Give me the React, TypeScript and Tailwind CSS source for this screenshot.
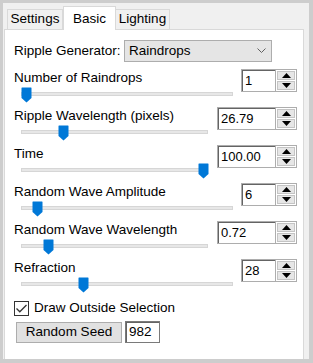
const font = "font-['Liberation_Sans',Arial,sans-serif]";

const rows = [
  { label: "Number of Raindrops", value: "1", thumb: 21, end: 233, wide: false },
  { label: "Ripple Wavelength (pixels)", value: "26.79", thumb: 58, end: 208, wide: true },
  { label: "Time", value: "100.00", thumb: 198, end: 208, wide: true },
  { label: "Random Wave Amplitude", value: "6", thumb: 32, end: 233, wide: false },
  { label: "Random Wave Wavelength", value: "0.72", thumb: 43, end: 208, wide: true },
  { label: "Refraction", value: "28", thumb: 78, end: 233, wide: false },
];

function Thumb() {
  return (
    <svg width="11" height="16" viewBox="0 0 11 16">
      <path d="M1 0.5 H10 Q10.5 0.5 10.5 1 V11 L5.5 15.5 L0.5 11 V1 Q0.5 0.5 1 0.5 Z" fill="#0078d7" />
    </svg>
  );
}

function Spin({ value, wide }: { value: string; wide: boolean }) {
  return (
    <div className={`flex h-[23px] border border-[#adadad] bg-white ${wide ? "w-[80px]" : "w-[56px]"}`}>
      <div className="flex flex-1 items-center border-l border-t border-[#646464] pl-[2px] text-[13px] text-black">
        {value}
      </div>
      <div className="flex w-[21px] flex-col gap-px border-l border-[#adadad] bg-white p-px">
        <div className="flex flex-1 items-center justify-center border border-[#c4c4c4] bg-[#e6e6e6]">
          <svg width="9" height="5" viewBox="0 0 9 5">
            <path d="M0 5 L4.5 0 L9 5 Z" fill="#000" />
          </svg>
        </div>
        <div className="flex flex-1 items-center justify-center border border-[#c4c4c4] bg-[#e6e6e6]">
          <svg width="9" height="5" viewBox="0 0 9 5">
            <path d="M0 0 L9 0 L4.5 5 Z" fill="#000" />
          </svg>
        </div>
      </div>
    </div>
  );
}

function Group({ label, value, thumb, end, wide }: (typeof rows)[number]) {
  return (
    <div className="flex h-[38px] items-start pl-[9px] pr-[6px]">
      <div className="flex flex-1 flex-col">
        <div className="h-[16px] whitespace-nowrap pt-px text-[13.5px] leading-[16px] text-black">{label}</div>
        <div className="relative mt-[2px] h-[16px]">
          <div
            className="ml-[7px] mt-[5px] h-[4px] border border-[#d6d6d6] bg-[#e7e7e7]"
            style={{ width: end - 21 }}
          />
          <div className="absolute top-0" style={{ left: thumb - 14 }}>
            <Thumb />
          </div>
        </div>
      </div>
      <Spin value={value} wide={wide} />
    </div>
  );
}

export default function App() {
  return (
    <div className={`h-[363px] w-[313px] bg-[#cdcdcd] pl-[3px] pt-[3px] ${font}`}>
      <div className="flex h-[356px] w-[306px] flex-col bg-[#f0f0f0] pl-px pr-[5px]">
        <div className="flex h-[26px] items-end pl-[3px] text-[13.5px] text-black">
          <div className="flex h-[20px] w-[56px] items-center justify-center border border-b-0 border-[#d9d9d9] bg-[#f0f0f0]">
            Settings
          </div>
          <div className="relative z-10 -mb-px flex h-[24px] w-[53px] items-start justify-center border border-b-0 border-[#d9d9d9] bg-white pt-[2px]">
            Basic
          </div>
          <div className="flex h-[20px] w-[54px] items-center justify-center border border-b-0 border-l-0 border-[#d9d9d9] bg-[#f0f0f0]">
            Lighting
          </div>
        </div>
        <div className="flex flex-1 flex-col border border-b-0 border-[#d9d9d9] bg-white pt-[10px] text-[13.5px] text-black">
          <div className="flex h-[22px] items-center pl-[9px]">
            <span className="w-[110px] whitespace-nowrap">Ripple Generator:</span>
            <div className="flex h-[22px] w-[148px] items-center justify-between border border-[#adadad] bg-[#e5e5e5] pl-[4px] pr-[5px]">
              <span>Raindrops</span>
              <svg width="9" height="6" viewBox="0 0 9 6">
                <path d="M0.5 0.5 L4.5 4.5 L8.5 0.5" fill="none" stroke="#606060" strokeWidth="1" />
              </svg>
            </div>
          </div>
          <div className="mt-[7px] flex flex-col">
            {rows.map((r) => (
              <Group key={r.label} {...r} />
            ))}
          </div>
          <div className="mt-[3px] flex h-[16px] items-center gap-[5px] pl-[9px]">
            <div className="flex h-[15px] w-[15px] items-center justify-center border border-[#333333] bg-white">
              <svg width="11" height="9" viewBox="0 0 11 9">
                <path d="M0.5 4.5 L3.8 7.8 L10.5 1" fill="none" stroke="#333333" strokeWidth="1.3" />
              </svg>
            </div>
            <span>Draw Outside Selection</span>
          </div>
          <div className="mt-[5px] flex items-center gap-[3px] pl-[11px]">
            <div className="flex h-[21px] w-[106px] items-center justify-center border border-[#adadad] bg-[#e1e1e1]">
              Random Seed
            </div>
            <div className="flex h-[22px] w-[35px] border border-[#7a7a7a] bg-white">
              <div className="flex flex-1 items-center border-l border-t border-[#646464] pl-[2px]">982</div>
            </div>
          </div>
        </div>
      </div>
    </div>
  );
}
